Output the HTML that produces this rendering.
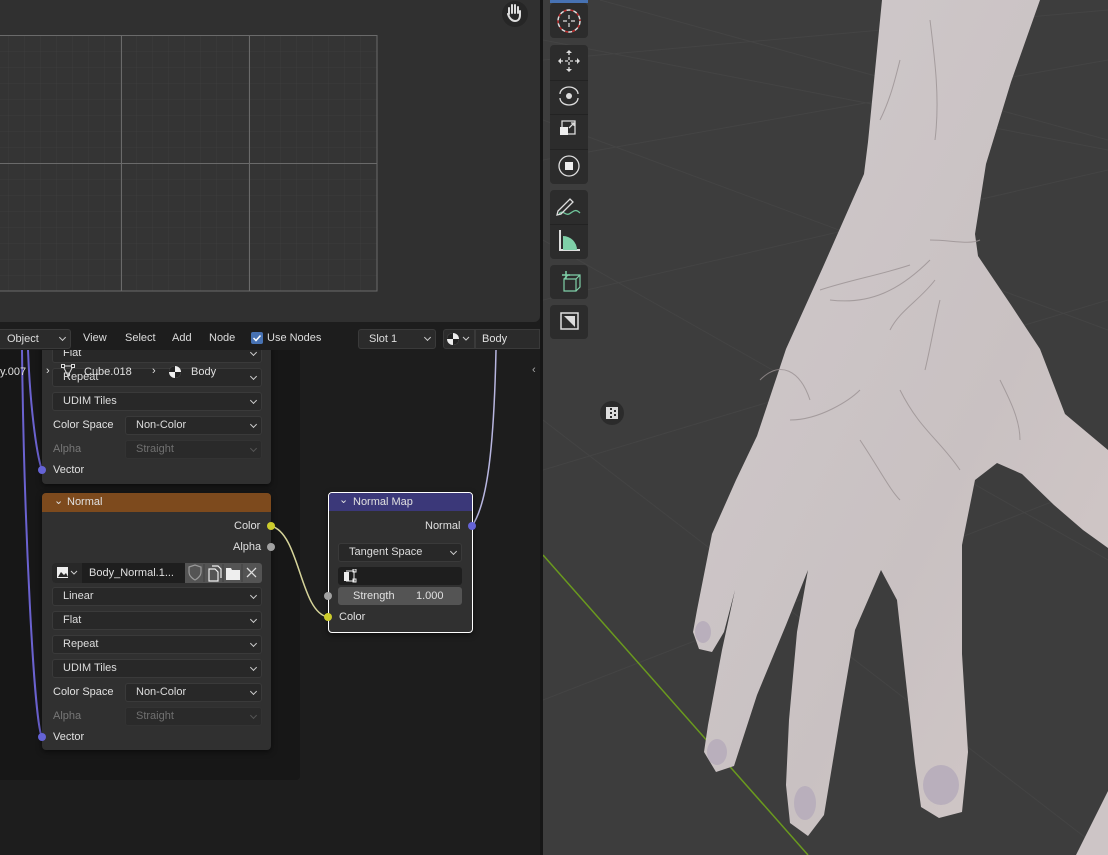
<!DOCTYPE html>
<html><head><meta charset="utf-8"><style>
*{margin:0;padding:0;box-sizing:border-box}
body{width:1108px;height:855px;overflow:hidden;background:#1d1d1d;font-family:"Liberation Sans",sans-serif;font-size:11px;color:#e0e0e0;position:relative}
.a{position:absolute}
.dd{position:absolute;height:19px;background:#282828;border:1px solid #3a3a3a;border-radius:3px;padding-left:10px;line-height:17px;color:#ddd}
.dd:after{content:"";position:absolute;right:5px;top:5px;width:4px;height:4px;border-right:1px solid #ccc;border-bottom:1px solid #ccc;transform:rotate(45deg)}
.dis{color:#707070;background:#2a2a2a;border-color:#333}
.dis:after{border-color:#555}
.lbl{position:absolute;line-height:13px}
.node{position:absolute;background:#303030;border-radius:4px;box-shadow:0 2px 6px rgba(0,0,0,.5)}
.sock{position:absolute;width:8px;height:8px;border-radius:50%}
.tb{position:absolute;left:550px;width:38px;background:#2c2c2c;border-radius:4px}
.hd{position:absolute;top:330px;line-height:16px;color:#ddd}
</style></head><body>

<div class="a" style="left:0;top:0;width:540px;height:322px;background:#303030;border-bottom-right-radius:6px"></div>
<svg class="a" style="left:0;top:0" width="540" height="322">
<defs><pattern id="g" x="-7" y="36" width="16" height="16" patternUnits="userSpaceOnUse"><path d="M16 0V16M0 16H16" stroke="#3d3d3d" stroke-width="1"/></pattern></defs>
<rect x="0" y="36" width="377" height="255" fill="#343434"/>
<rect x="0" y="36" width="377" height="255" fill="url(#g)"/>
<path d="M121.5 36V291M249.5 36V291M0 163.5H377" stroke="#6a6a6a"/>
<rect x="-1" y="35.5" width="378" height="255.5" fill="none" stroke="#6a6a6a"/>
<circle cx="515" cy="14" r="13" fill="#262626"/>
<path d="M509 14v-6M512 13v-8M515 13v-8M518 13v-6M508 14c1 4 4 7 7 7s5-2 5-6v-4" stroke="#ddd" stroke-width="2" fill="none" stroke-linecap="round"/>
</svg>

<div class="a" style="left:0;top:323px;width:540px;height:532px;background:#1d1d1d"></div>
<div class="a" style="left:0;top:345px;width:300px;height:435px;background:#171717;border-radius:0 0 4px 0"></div>

<svg class="a" style="left:0;top:323px" width="540" height="532">
<path d="M22 27 C 24 200, 34 400, 42 414" stroke="#6b62d0" stroke-width="2" fill="none"/>
<path d="M28 27 C 30 80, 36 130, 42 147" stroke="#6b62d0" stroke-width="2" fill="none"/>
<path d="M496 27 C 494 120, 488 180, 472 203" stroke="#b8b6e0" stroke-width="1.5" fill="none"/>
<path d="M271 203 C 300 210, 300 290, 328 294" stroke="#d6d49a" stroke-width="1.5" fill="none"/>
</svg>

<div class="node" style="left:42px;top:340px;width:229px;height:144px"></div>
<div class="dd" style="left:52px;top:344px;width:210px">Flat</div>
<div class="dd" style="left:52px;top:368px;width:210px">Repeat</div>
<div class="dd" style="left:52px;top:392px;width:210px">UDIM Tiles</div>
<div class="lbl" style="left:53px;top:419px">Color Space</div>
<div class="dd" style="left:125px;top:416px;width:137px">Non-Color</div>
<div class="lbl" style="left:53px;top:443px;color:#777">Alpha</div>
<div class="dd dis" style="left:125px;top:440px;width:137px">Straight</div>
<div class="sock" style="left:38px;top:466px;background:#6563d6"></div>
<div class="lbl" style="left:53px;top:464px">Vector</div>

<div class="node" style="left:42px;top:493px;width:229px;height:257px"></div>
<div class="a" style="left:42px;top:493px;width:229px;height:19px;background:#7d4a1d;border-radius:4px 4px 0 0"></div>
<div class="lbl" style="left:54px;top:495px">⌄</div>
<div class="lbl" style="left:67px;top:496px">Normal</div>
<div class="lbl" style="left:234px;top:520px">Color</div>
<div class="sock" style="left:267px;top:522px;background:#cccc2c"></div>
<div class="lbl" style="left:233px;top:541px">Alpha</div>
<div class="sock" style="left:267px;top:543px;background:#a1a1a1"></div>
<div class="a" style="left:52px;top:563px;width:210px;height:20px;background:#545454;border-radius:3px"></div>
<div class="a" style="left:52px;top:563px;width:30px;height:20px;background:#282828;border-radius:3px 0 0 3px"></div>
<svg class="a" style="left:56px;top:566px" width="26" height="14"><rect x="1" y="1" width="11" height="11" fill="#eee"/><path d="M2 11l3-5 3 3 2-2 2 4z" fill="#282828"/><path d="M15 5l3 3 3-3" stroke="#ccc" fill="none"/></svg>
<div class="a" style="left:82px;top:563px;width:103px;height:20px;background:#1e1e1e;padding-left:7px;line-height:20px">Body_Normal.1...</div>
<svg class="a" style="left:186px;top:564px" width="76" height="18"><path d="M3 3l6-2 6 2v5c0 5-6 8-6 8s-6-3-6-8z" fill="none" stroke="#999" stroke-width="1.2"/><path d="M23 5h6l3 3v9h-9z M26 2h6l3 3v9" fill="none" stroke="#eee" stroke-width="1.2"/><path d="M40 4h5l1 2h8v10h-14z" fill="#eee"/><path d="M61 4l9 9M70 4l-9 9" stroke="#ddd" stroke-width="1.3"/><path d="M18 0v18M37 0v18M56 0v18" stroke="#404040"/></svg>
<div class="dd" style="left:52px;top:587px;width:210px">Linear</div>
<div class="dd" style="left:52px;top:611px;width:210px">Flat</div>
<div class="dd" style="left:52px;top:635px;width:210px">Repeat</div>
<div class="dd" style="left:52px;top:659px;width:210px">UDIM Tiles</div>
<div class="lbl" style="left:53px;top:686px">Color Space</div>
<div class="dd" style="left:125px;top:683px;width:137px">Non-Color</div>
<div class="lbl" style="left:53px;top:710px;color:#777">Alpha</div>
<div class="dd dis" style="left:125px;top:707px;width:137px">Straight</div>
<div class="sock" style="left:38px;top:733px;background:#6563d6"></div>
<div class="lbl" style="left:53px;top:731px">Vector</div>

<div class="node" style="left:328px;top:492px;width:145px;height:141px;border:1px solid #fff"></div>
<div class="a" style="left:329px;top:493px;width:143px;height:18px;background:#3b3879;border-radius:3px 3px 0 0"></div>
<div class="lbl" style="left:339px;top:494px">⌄</div>
<div class="lbl" style="left:353px;top:496px">Normal Map</div>
<div class="lbl" style="left:425px;top:520px">Normal</div>
<div class="sock" style="left:468px;top:522px;background:#6563d6"></div>
<div class="dd" style="left:338px;top:543px;width:124px">Tangent Space</div>
<div class="a" style="left:338px;top:567px;width:124px;height:18px;background:#1e1e1e;border-radius:3px"></div>
<svg class="a" style="left:343px;top:569px" width="16" height="14"><rect x="1" y="3" width="5" height="9" fill="#eee"/><path d="M3 2h8v10h-8" stroke="#eee" fill="none"/><rect x="10" y="0" width="3" height="3" fill="none" stroke="#eee"/><rect x="10" y="10" width="3" height="3" fill="none" stroke="#eee"/></svg>
<div class="a" style="left:338px;top:587px;width:124px;height:18px;background:#545454;border-radius:3px"></div>
<div class="lbl" style="left:353px;top:590px">Strength</div>
<div class="lbl" style="left:416px;top:590px">1.000</div>
<div class="sock" style="left:324px;top:592px;background:#a1a1a1"></div>
<div class="sock" style="left:324px;top:613px;background:#cccc2c"></div>
<div class="lbl" style="left:339px;top:611px">Color</div>

<div class="a" style="left:0;top:326px;width:540px;height:24px;background:#1d1d1d"></div>
<div class="dd" style="left:-4px;top:329px;width:75px;background:#2b2b2b;height:20px;line-height:18px">Object</div>
<div class="hd" style="left:83px">View</div>
<div class="hd" style="left:125px">Select</div>
<div class="hd" style="left:172px">Add</div>
<div class="hd" style="left:209px">Node</div>
<div class="a" style="left:251px;top:332px;width:12px;height:12px;background:#4772b3;border-radius:2px"></div>
<svg class="a" style="left:251px;top:332px" width="12" height="12"><path d="M2.5 6l2.5 2.5 4.5-5" stroke="#fff" stroke-width="1.5" fill="none"/></svg>
<div class="hd" style="left:267px">Use Nodes</div>
<div class="dd" style="left:358px;top:329px;width:78px;background:#2b2b2b;height:20px;line-height:18px">Slot 1</div>
<div class="a" style="left:443px;top:329px;width:32px;height:20px;background:#2b2b2b;border:1px solid #3a3a3a;border-radius:3px 0 0 3px"></div>
<svg class="a" style="left:446px;top:332px" width="26" height="14"><circle cx="7" cy="7" r="6" fill="#eee"/><path d="M7 7V1A6 6 0 0 0 1 7z M7 7h6a6 6 0 0 1-6 6z" fill="#222"/><path d="M17 5l3 3 3-3" stroke="#ccc" fill="none"/></svg>
<div class="a" style="left:475px;top:329px;width:65px;height:20px;background:#2b2b2b;border:1px solid #3a3a3a;padding-left:6px;line-height:18px">Body</div>

<div class="lbl" style="left:0;top:366px">y.007</div>
<div class="lbl" style="left:46px;top:365px">›</div>
<svg class="a" style="left:61px;top:364px" width="14" height="14"><path d="M2 2h10L7 12z" stroke="#ddd" fill="none"/><rect x="0.5" y="0.5" width="3" height="3" fill="#1d1d1d" stroke="#ddd"/><rect x="10.5" y="0.5" width="3" height="3" fill="#1d1d1d" stroke="#ddd"/></svg>
<div class="lbl" style="left:84px;top:366px">Cube.018</div>
<div class="lbl" style="left:152px;top:365px">›</div>
<svg class="a" style="left:168px;top:365px" width="14" height="14"><circle cx="7" cy="7" r="6" fill="#eee"/><path d="M7 7V1A6 6 0 0 0 1 7z M7 7h6a6 6 0 0 1-6 6z" fill="#222"/></svg>
<div class="lbl" style="left:191px;top:366px">Body</div>
<div class="lbl" style="left:532px;top:364px;color:#aaa">‹</div>

<div class="a" style="left:540px;top:0;width:3px;height:855px;background:#161616"></div>

<svg class="a" style="left:543px;top:0" width="565" height="855" viewBox="543 0 565 855">
<rect x="543" y="0" width="565" height="855" fill="#3d3d3d"/>
<g stroke="#444" stroke-width="1" fill="none">
<path d="M543 60 L1108 10 M543 160 L1108 60 M543 300 L1108 170 M543 470 L1108 300 M543 700 L1108 480 M543 40 L1108 150 M543 120 L1108 330 M543 240 L1108 560 M543 420 L1108 855 M600 0 L1108 140"/>
</g>
<path d="M543 555 L808 855" stroke="#6a9a1e" stroke-width="1.5"/>
<defs><linearGradient id="sk" x1="0" y1="0" x2="1" y2="1"><stop offset="0" stop-color="#d0cacc"/><stop offset="0.6" stop-color="#c9c1c2"/><stop offset="1" stop-color="#d3c9c8"/></linearGradient></defs>
<path fill="url(#sk)" d="M882 0 L868 142 L864 174 L823 267 L786 349 L757 436 L736 480 L712 534 L697 610 L693 632 L699 649 L712 652 L724 632 L735 590 L722 650 L708 725 L704 752 L716 772 L734 766 L757 695 L786 625 L808 570 L797 632 L789 720 L786 785 L790 823 L808 836 L824 815 L841 712 L855 630 L881 570 L897 600 L906 682 L915 763 L921 807 L939 818 L962 812 L968 752 L962 654 L962 545 L975 480 L997 463 L1022 474 L1054 505 L1083 530 L1108 548 L1108 450 L1065 414 L1040 349 L1011 305 L978 256 L975 234 L986 164 L1011 82 L1040 0 Z"/>
<path fill="#cdc5c6" d="M1108 791 L1076 855 L1108 855 Z"/>
<g fill="#b9afbc"><ellipse cx="703" cy="632" rx="8" ry="11"/><ellipse cx="717" cy="752" rx="10" ry="13"/><ellipse cx="805" cy="803" rx="11" ry="17"/><ellipse cx="941" cy="785" rx="18" ry="20"/></g>
<g stroke="#9a9192" stroke-width="1" fill="none" opacity="0.8">
<path d="M820 290c30-10 60-15 90-25M830 300c40 5 70-10 100-40M890 330c10-20 30-30 45-50M760 380c20-20 40-10 50 20M790 420c30 0 60-20 70-30M860 440c20 30 30 50 40 60M940 300c-5 20-10 50-15 70M900 390c20 40 40 50 60 80M1000 380c10 20 20 40 20 60M930 240c20 0 40 5 50 0M900 60c-5 20-10 40-20 60M930 20c5 40 10 80 5 120"/>
</g>
<circle cx="612" cy="413" r="12" fill="#2b2b2b"/>
<rect x="606" y="407" width="12" height="12" fill="#ddd"/><path d="M610 408h2v2h-2zM614 410h2v2h-2zM610 412h2v2h-2zM614 414h2v2h-2zM610 416h2v2h-2z" fill="#2b2b2b"/>
</svg>

<div class="a" style="left:550px;top:0;width:38px;height:3px;background:#4772b3"></div>
<div class="tb" style="top:3px;height:35px"></div>
<div class="tb" style="top:45px;height:139px"></div>
<div class="tb" style="top:190px;height:69px"></div>
<div class="tb" style="top:265px;height:34px"></div>
<div class="tb" style="top:305px;height:34px"></div>
<svg class="a" style="left:550px;top:0" width="38" height="345">
<path d="M0 80.5H38M0 114.5H38M0 149.5H38M0 224.5H38" stroke="#232323"/>
<circle cx="19" cy="21" r="11" fill="none" stroke="#ddd" stroke-width="1.5" stroke-dasharray="4 3"/>
<circle cx="19" cy="21" r="11" fill="none" stroke="#c03030" stroke-width="1.5" stroke-dasharray="3 4" stroke-dashoffset="3"/>
<path d="M19 15v4M19 23v4M13 21h4M21 21h4" stroke="#ddd" stroke-width="1.2"/>
<path d="M19 52v18M10 61h18" stroke="#ddd" stroke-width="1.3" stroke-dasharray="3 2"/>
<path d="M19 50l-3 3h6zM19 72l-3-3h6zM8 61l3-3v6zM30 61l-3-3v6z" fill="#ddd"/>
<path d="M10 94a9 7 0 0 1 18 0M10 98a9 7 0 0 0 18 0" stroke="#ddd" fill="none" stroke-width="1.3"/><circle cx="19" cy="96" r="3" fill="#ddd"/>
<rect x="10" y="127" width="8" height="8" fill="#eee"/><path d="M12 127v-6h13v13h-7M19 128l5-5M21 123h3v3" stroke="#ddd" fill="none" stroke-width="1.3"/>
<circle cx="19" cy="166" r="10" fill="none" stroke="#ddd" stroke-width="1.3"/><rect x="15" y="162" width="8" height="8" fill="#eee"/>
<path d="M9 214c4-5 6 2 10 0s6-6 11-1" stroke="#6fc49a" fill="none" stroke-width="1.3"/><path d="M8 211l12-12 3 3-12 12-4 1z" fill="none" stroke="#ddd" stroke-width="1.3"/>
<path d="M10 230v20h20" stroke="#ddd" fill="none" stroke-width="2"/><path d="M13 250v-14a14 14 0 0 1 14 14z" fill="#7fd0a8"/>
<path d="M12 275h8 M16 271v8" stroke="#7fd0a8" stroke-width="1.5"/><path d="M14 279h12v12h-12zM14 279l4-4h12v12l-4 4M26 279l4-4" stroke="#7fd0a8" fill="none" stroke-width="1.2"/>
<rect x="11" y="313" width="17" height="16" fill="none" stroke="#ddd" stroke-width="1.5"/><path d="M14 316h11v11z" fill="#ddd"/>
</svg>
</body></html>
